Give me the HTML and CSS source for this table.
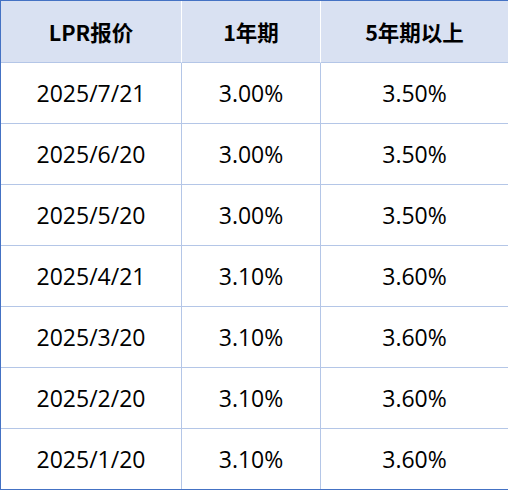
FILE: index.html
```html
<!DOCTYPE html>
<html lang="zh-CN">
<head>
<meta charset="utf-8">
<link rel="stylesheet" href="styles.css">
</head>
<body>
<table class="lpr">
  <colgroup>
    <col class="c1"><col class="c2"><col class="c3">
  </colgroup>
  <thead>
    <tr><th>LPR报价</th><th>1年期</th><th>5年期以上</th></tr>
  </thead>
  <tbody>
    <tr><td>2025/7/21</td><td>3.00%</td><td>3.50%</td></tr>
    <tr><td>2025/6/20</td><td>3.00%</td><td>3.50%</td></tr>
    <tr><td>2025/5/20</td><td>3.00%</td><td>3.50%</td></tr>
    <tr><td>2025/4/21</td><td>3.10%</td><td>3.60%</td></tr>
    <tr><td>2025/3/20</td><td>3.10%</td><td>3.60%</td></tr>
    <tr><td>2025/2/20</td><td>3.10%</td><td>3.60%</td></tr>
    <tr><td>2025/1/20</td><td>3.10%</td><td>3.60%</td></tr>
  </tbody>
</table>
</body>
</html>
```
FILE: styles.css
```css
html, body {
  margin: 0;
  padding: 0;
  background: #ffffff;
}
.lpr {
  border-collapse: separate;
  border-spacing: 0;
  border: 1px solid #4472c4;
  width: 508px;
  table-layout: fixed;
  font-family: "Open Sans", "Noto Sans CJK SC", sans-serif;
  color: #000000;
}
.c1 { width: 181px; }
.c2 { width: 139px; }
.c3 { width: 187px; }
.lpr th,
.lpr td {
  padding: 0;
  text-align: center;
  vertical-align: middle;
  border-right: 1px solid #b4c6e7;
  border-bottom: 1px solid #b4c6e7;
}
.lpr th:last-child,
.lpr td:last-child {
  border-right: none;
}
.lpr tbody tr:last-child td {
  border-bottom: none;
}
.lpr th {
  height: 61px;
  background: #d9e1f2;
  font-family: "Noto Sans CJK SC", sans-serif;
  font-weight: 700;
  font-size: 21.5px;
  border-right-color: #ffffff;
}
.lpr td {
  height: 60px;
  font-size: 23px;
  font-weight: 400;
}
```
